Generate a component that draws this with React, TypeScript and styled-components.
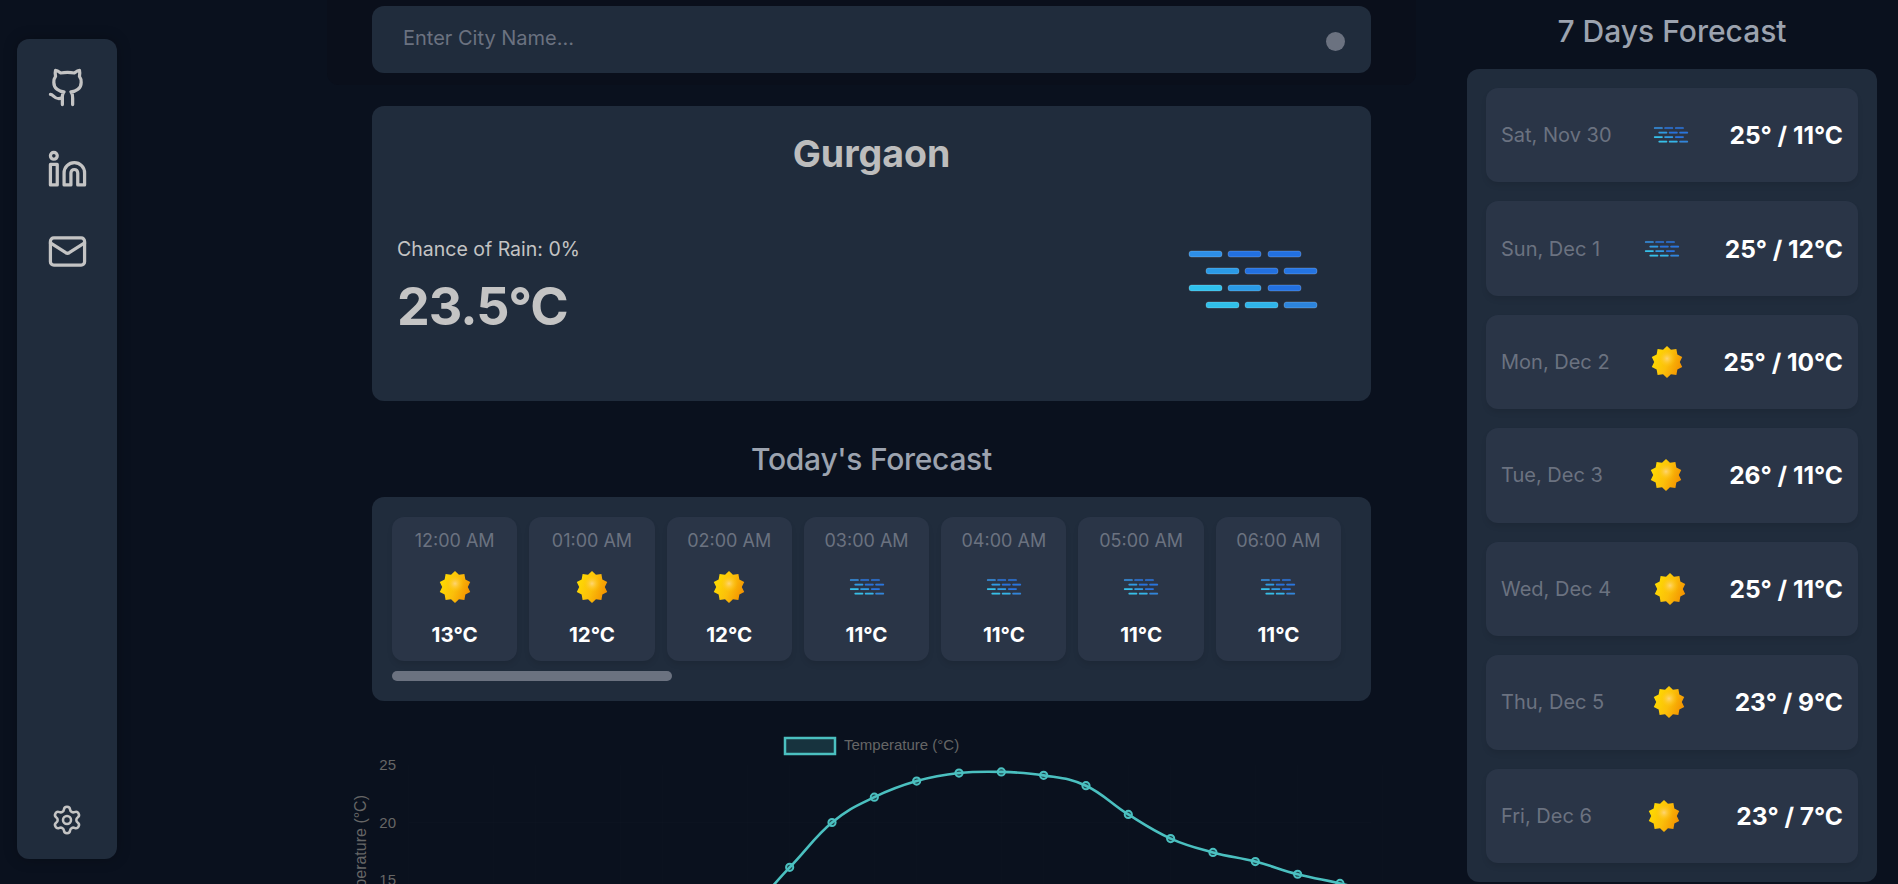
import React from "react";
import styled, { createGlobalStyle } from "styled-components";
import { Github, Linkedin, Mail, Settings } from "lucide-react";

const Global = createGlobalStyle`
  html, body { margin: 0; padding: 0; height: 884px; overflow: hidden; background: #0a111e; }
  body { font-family: Inter, "Liberation Sans", sans-serif; }
  * { box-sizing: border-box; }
`;

const Page = styled.div`
  display: flex;
  align-items: flex-start;
  height: 884px;
  overflow: hidden;
`;

const SideBar = styled.nav`
  flex: none;
  width: 100px;
  height: 820px;
  margin: 39px 0 0 17px;
  padding: 28px 0 23px;
  background: #202c3c;
  border-radius: 12px;
  box-shadow: 0 0 14px rgba(0, 0, 0, 0.25);
  display: flex;
  flex-direction: column;
  align-items: center;
  justify-content: space-between;
  color: #c4c4c4;
`;

const SideGroup = styled.div`
  display: flex;
  flex-direction: column;
  align-items: center;
  gap: 41px;
`;

const Main = styled.main`
  flex: none;
  width: 999px;
  margin-left: 255px;
`;

const SearchWrap = styled.div`
  margin: 0 -45px;
  padding: 6px 45px 12px;
  background: #0a0f1b;
  border-radius: 0 0 12px 12px;
`;

const SearchBar = styled.div`
  height: 67px;
  background: #202c3c;
  border-radius: 12px;
  display: flex;
  align-items: center;
  padding: 3px 26px 0 31px;
`;

const SearchInput = styled.input`
  flex: 1;
  height: 100%;
  padding: 0 0 6px;
  border: 0;
  outline: 0;
  background: transparent;
  color: #fff;
  font: 400 20px Inter, sans-serif;
  &::placeholder { color: #6b7280; opacity: 1; }
`;

const SearchDot = styled.span`
  width: 19px;
  height: 19px;
  border-radius: 50%;
  background: #6b7280;
`;

const WeatherCard = styled.section`
  margin-top: 21px;
  height: 295px;
  padding: 28px 25px 0;
  background: #202c3c;
  border-radius: 12px;
`;

const City = styled.h1`
  margin: 0;
  font-size: 37.5px;
  line-height: 40px;
  font-weight: 700;
  color: #bdbdbd;
  text-align: center;
`;

const WeatherRow = styled.div`
  margin-top: 31px;
  padding-right: 18px;
  display: flex;
  justify-content: space-between;
  align-items: flex-start;
`;

const WeatherText = styled.div`
  margin-top: 30px;
`;

const Chance = styled.div`
  font-size: 19.5px;
  line-height: 28px;
  color: #c4c4c4;
`;

const BigTemp = styled.div`
  margin-top: 14px;
  font-size: 52px;
  line-height: 60px;
  font-weight: 700;
  letter-spacing: -1px;
  color: #c4c4c4;
`;

const SectionTitle = styled.h2`
  margin: 0;
  font-size: 30px;
  line-height: 36px;
  font-weight: 500;
  color: #9ca3af;
  text-align: center;
`;

const TodayTitle = styled(SectionTitle)`
  margin: 40px 0 20px;
  letter-spacing: -0.3px;
`;

const HourPanel = styled.section`
  height: 204px;
  padding: 20px;
  background: #202c3c;
  border-radius: 12px;
`;

const HourRow = styled.div`
  display: flex;
  gap: 12px;
`;

const ScrollThumb = styled.div`
  width: 280px;
  height: 10px;
  margin-top: 10px;
  background: #6b7280;
  border-radius: 6px;
`;

const HourCard = styled.div`
  flex: none;
  width: 125.3px;
  height: 144px;
  padding: 13px 0 12px;
  background: #2a3547;
  border-radius: 12px;
  box-shadow: 0 4px 6px -1px rgba(0, 0, 0, 0.1);
  display: flex;
  flex-direction: column;
  align-items: center;
`;

const HourTime = styled.div`
  font-size: 18px;
  line-height: 22px;
  color: #6b7280;
`;

const HourIcon = styled.div`
  margin-top: 15px;
  height: 40px;
`;

const HourTemp = styled.div`
  margin-top: 14px;
  font-size: 20.5px;
  line-height: 28px;
  font-weight: 700;
  color: #fff;
`;

const ChartWrap = styled.section`
  margin-top: 20px;
  height: 163px;
`;

const ChartSvg = styled.svg`
  display: block;
  overflow: visible;
`;

const Side = styled.aside`
  flex: none;
  width: 410px;
  margin-left: 96px;
  padding-top: 13px;
`;

const WeekPanel = styled.section`
  margin-top: 20px;
  height: 813px;
  padding: 19px;
  background: #202c3c;
  border-radius: 12px;
  display: flex;
  flex-direction: column;
  gap: 19px;
`;

const DayRow = styled.div`
  flex: 1;
  padding: 0 15px;
  background: #2a3547;
  border-radius: 12px;
  box-shadow: 0 4px 6px -1px rgba(0, 0, 0, 0.1);
  display: flex;
  align-items: center;
  justify-content: space-between;
`;

const DayName = styled.div`
  font-size: 20px;
  color: #6b7280;
`;

const DayTemp = styled.div`
  font-size: 24.5px;
  font-weight: 700;
  color: #fff;
`;

const MistIcon = ({ size }: { size: number }) => {
  const rows = [
    { y: 46, xs: [11, 50, 90], c: ["#2d8fe8", "#2270e0", "#2270e0"] },
    { y: 63, xs: [28, 67, 106], c: ["#2a9ae6", "#2270e0", "#2474e2"] },
    { y: 80, xs: [11, 50, 90], c: ["#2fc0ec", "#2a9ae6", "#2270e0"] },
    { y: 97, xs: [28, 67, 106], c: ["#30bfe9", "#2fb4e9", "#2c84dc"] },
  ];
  return (
    <svg width={size} height={size} viewBox="0 0 150 150">
      {rows.map((r) =>
        r.xs.map((x, i) => (
          <rect
            key={`${r.y}-${x}`}
            x={x}
            y={r.y}
            width={33}
            height={6}
            rx={2.5}
            fill={r.c[i]}
            stroke="rgba(255,255,255,0.25)"
            strokeWidth={0.8}
          />
        ))
      )}
    </svg>
  );
};

const sunPoints = (() => {
  const pts: string[] = [];
  const n = 10;
  for (let i = 0; i < n * 2; i++) {
    const r = i % 2 === 0 ? 16 : 12.8;
    const a = (Math.PI * i) / n - Math.PI / 2;
    pts.push(`${(20 + r * Math.cos(a)).toFixed(2)},${(20 + r * Math.sin(a)).toFixed(2)}`);
  }
  return pts.join(" ");
})();

const SunIcon = ({ id }: { id: string }) => (
  <svg width={40} height={40} viewBox="0 0 40 40">
    <defs>
      <linearGradient id={`${id}-a`} x1="0" y1="0.2" x2="1" y2="0.6">
        <stop offset="0" stopColor="#ffdf00" />
        <stop offset="0.55" stopColor="#fbbf0a" />
        <stop offset="1" stopColor="#f39200" />
      </linearGradient>
      <radialGradient id={`${id}-b`} cx="0.5" cy="0.42" r="0.5">
        <stop offset="0" stopColor="#ffd780" stopOpacity="0.9" />
        <stop offset="1" stopColor="#ffc400" stopOpacity="0" />
      </radialGradient>
    </defs>
    <polygon points={sunPoints} fill={`url(#${id}-a)`} />
    <circle cx="20" cy="18" r="9" fill={`url(#${id}-b)`} />
  </svg>
);

const WeatherGlyph = ({ kind, id }: { kind: string; id: string }) =>
  kind === "sun" ? <SunIcon id={id} /> : <MistIcon size={40} />;

const hours = [
  { label: "12:00 AM", temp: 13, kind: "sun" },
  { label: "01:00 AM", temp: 12, kind: "sun" },
  { label: "02:00 AM", temp: 12, kind: "sun" },
  { label: "03:00 AM", temp: 11, kind: "mist" },
  { label: "04:00 AM", temp: 11, kind: "mist" },
  { label: "05:00 AM", temp: 11, kind: "mist" },
  { label: "06:00 AM", temp: 11, kind: "mist" },
];

const days = [
  { name: "Sat, Nov 30", kind: "mist", temp: "25° / 11°C" },
  { name: "Sun, Dec 1", kind: "mist", temp: "25° / 12°C" },
  { name: "Mon, Dec 2", kind: "sun", temp: "25° / 10°C" },
  { name: "Tue, Dec 3", kind: "sun", temp: "26° / 11°C" },
  { name: "Wed, Dec 4", kind: "sun", temp: "25° / 11°C" },
  { name: "Thu, Dec 5", kind: "sun", temp: "23° / 9°C" },
  { name: "Fri, Dec 6", kind: "sun", temp: "23° / 7°C" },
];

/* chart: coordinates are relative to the chart's own canvas */
const CX = 372;
const CY = 721;
const chartVals = [10, 10, 10, 10, 10, 10, 10, 11, 12.4, 16.1, 20, 22.2, 23.6, 24.3, 24.4, 24.1, 23.2, 20.7, 18.6, 17.4, 16.6, 15.5, 14.7, 13.8];
const px = (i: number) => 408.7 + i * 42.33 - CX;
const py = (v: number) => 765 + (25 - v) * 11.5 - CY;
const chartPts = chartVals.map((v, i) => ({ x: px(i), y: py(v) }));
const linePath = (() => {
  let d = `M${chartPts[0].x} ${chartPts[0].y}`;
  for (let i = 0; i < chartPts.length - 1; i++) {
    const p0 = chartPts[Math.max(0, i - 1)];
    const p1 = chartPts[i];
    const p2 = chartPts[i + 1];
    const p3 = chartPts[Math.min(chartPts.length - 1, i + 2)];
    const k = 0.2;
    d += ` C${p1.x + (p2.x - p0.x) * k} ${p1.y + (p2.y - p0.y) * k} ${p2.x - (p3.x - p1.x) * k} ${p2.y - (p3.y - p1.y) * k} ${p2.x} ${p2.y}`;
  }
  return d;
})();

const Chart = () => (
  <ChartSvg width={999} height={163} viewBox="0 0 999 163" fontFamily="'Liberation Sans', sans-serif" fill="#666">
    {chartVals.map((_, i) => (
      <line key={i} x1={px(i)} x2={px(i)} y1={44} y2={163} stroke="rgba(255,255,255,0.012)" />
    ))}
    {[25, 20, 15].map((v) => (
      <g key={v}>
        <line x1={37} x2={999} y1={py(v)} y2={py(v)} stroke="rgba(255,255,255,0.012)" />
        <text x={24} y={py(v) + 5} fontSize={15} textAnchor="end">{v}</text>
      </g>
    ))}
    <text transform="translate(-6 74) rotate(-90)" fontSize={16} textAnchor="end">Temperature (°C)</text>
    <rect x={413} y={17} width={50} height={16} fill="rgba(75,192,192,0.2)" stroke="#4bc0c0" strokeWidth={2.5} />
    <text x={472} y={29} fontSize={15}>Temperature (°C)</text>
    <path d={linePath} fill="none" stroke="#4bc0c0" strokeWidth={2.6} />
    {chartPts.map((p, i) => (
      <circle key={i} cx={p.x} cy={p.y} r={3.6} fill="rgba(75,192,192,0.3)" stroke="#4bc0c0" strokeWidth={2} />
    ))}
  </ChartSvg>
);

export default function App() {
  return (
    <>
      <Global />
      <Page>
        <SideBar>
          <SideGroup>
            <Github size={41} strokeWidth={1.9} />
            <Linkedin size={41} strokeWidth={1.9} />
            <Mail size={41} strokeWidth={1.9} />
          </SideGroup>
          <Settings size={32} strokeWidth={1.9} />
        </SideBar>
        <Main>
          <SearchWrap>
            <SearchBar>
              <SearchInput placeholder="Enter City Name..." />
              <SearchDot />
            </SearchBar>
          </SearchWrap>
          <WeatherCard>
            <City>Gurgaon</City>
            <WeatherRow>
              <WeatherText>
                <Chance>Chance of Rain: 0%</Chance>
                <BigTemp>23.5°C</BigTemp>
              </WeatherText>
              <MistIcon size={150} />
            </WeatherRow>
          </WeatherCard>
          <TodayTitle>Today's Forecast</TodayTitle>
          <HourPanel>
            <HourRow>
              {hours.map((h, i) => (
                <HourCard key={h.label}>
                  <HourTime>{h.label}</HourTime>
                  <HourIcon><WeatherGlyph kind={h.kind} id={`h${i}`} /></HourIcon>
                  <HourTemp>{h.temp}°C</HourTemp>
                </HourCard>
              ))}
            </HourRow>
            <ScrollThumb />
          </HourPanel>
          <ChartWrap>
            <Chart />
          </ChartWrap>
        </Main>
        <Side>
          <SectionTitle>7 Days Forecast</SectionTitle>
          <WeekPanel>
            {days.map((d, i) => (
              <DayRow key={d.name}>
                <DayName>{d.name}</DayName>
                <WeatherGlyph kind={d.kind} id={`d${i}`} />
                <DayTemp>{d.temp}</DayTemp>
              </DayRow>
            ))}
          </WeekPanel>
        </Side>
      </Page>
    </>
  );
}
